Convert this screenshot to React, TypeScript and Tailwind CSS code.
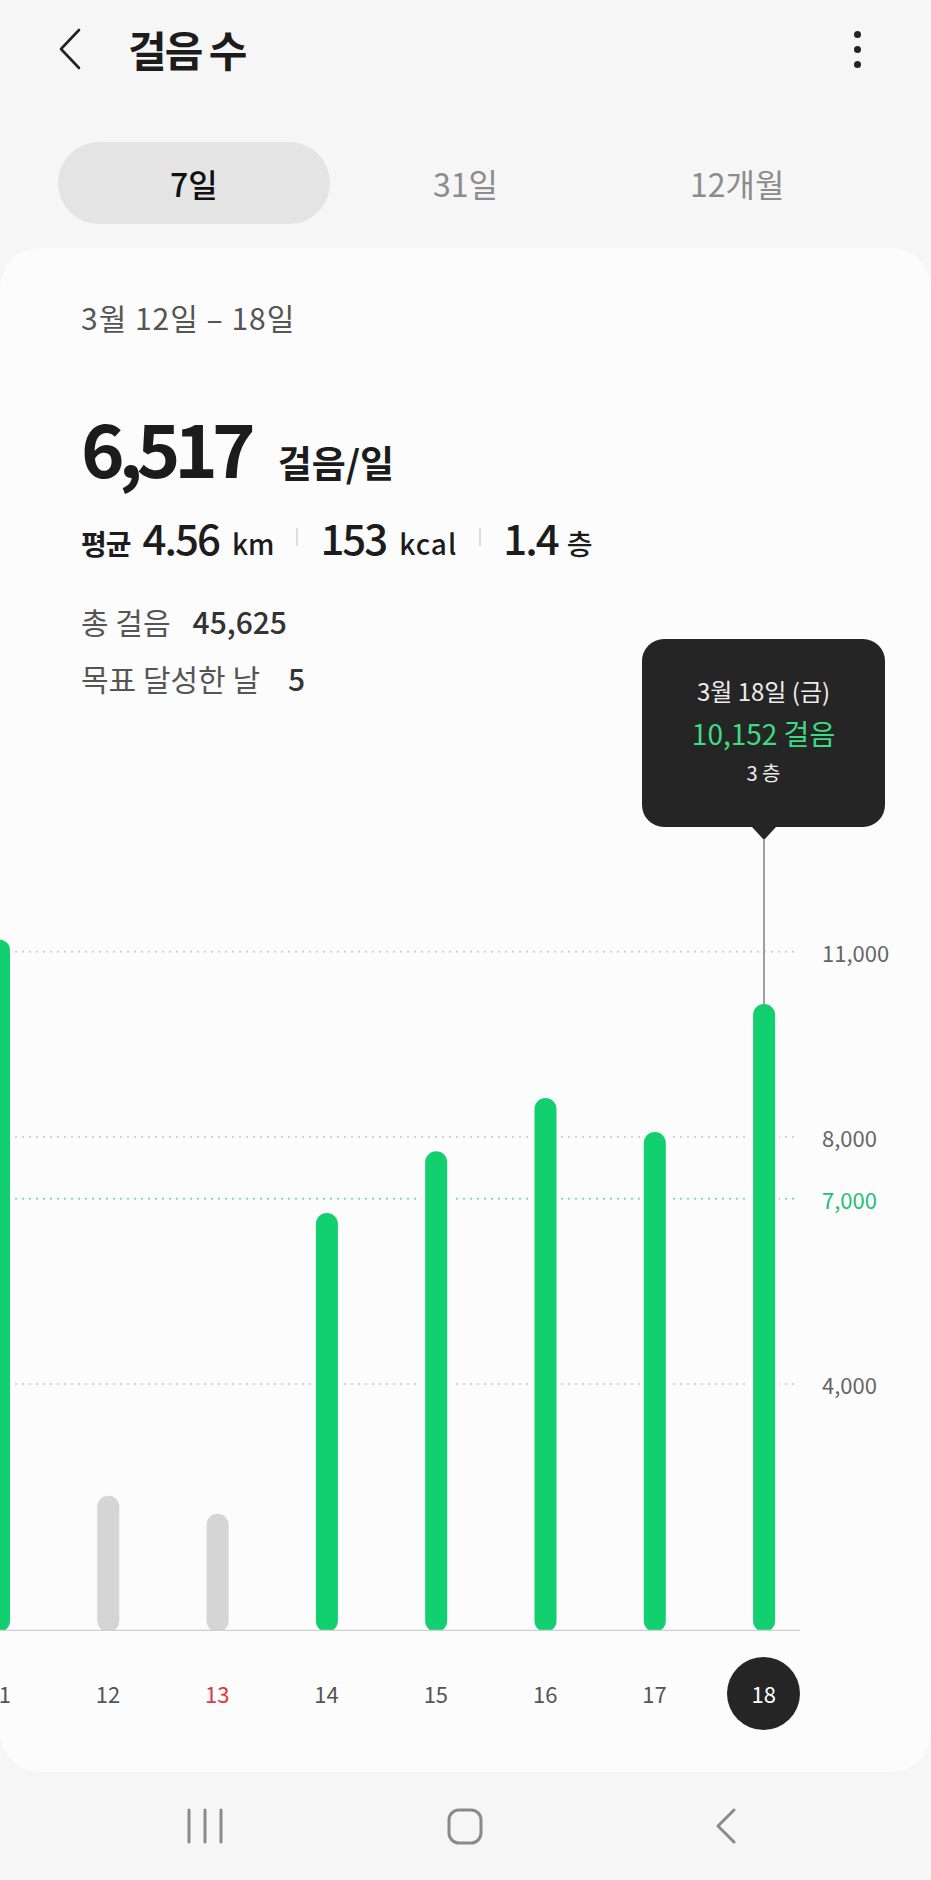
import React from "react";

const STEP = 109.3;
const X0 = -1;
const BASE = 731;
const PX = 0.06175;

const days = [
  { d: "11", v: 11200, green: true },
  { d: "12", v: 2190, green: false },
  { d: "13", v: 1900, green: false, red: true },
  { d: "14", v: 6770, green: true },
  { d: "15", v: 7770, green: true },
  { d: "16", v: 8630, green: true },
  { d: "17", v: 8080, green: true },
  { d: "18", v: 10152, green: true, sel: true },
];

const grid = [
  { v: 11000, label: "11,000", goal: false },
  { v: 8000, label: "8,000", goal: false },
  { v: 7000, label: "7,000", goal: true },
  { v: 4000, label: "4,000", goal: false },
];

function Chart() {
  return (
    <div className="relative h-[731px] w-full">
      <svg className="absolute inset-0" width={931} height={731} viewBox="0 0 931 731">
        {grid.map((g) => {
          const y = BASE - g.v * PX;
          return (
            <line
              key={g.v}
              x1={2}
              x2={797}
              y1={y}
              y2={y}
              stroke={g.goal ? "#5cd39e" : "#c6c6c6"}
              strokeWidth={2}
              strokeDasharray="0 7"
              strokeLinecap="round"
            />
          );
        })}
        {days.map((d, i) => {
          const cx = X0 + STEP * i;
          const top = BASE - d.v * PX;
          return (
            <rect key={"h" + d.d} x={cx - 15} y={top - 4} width={30} height={BASE - top + 8} rx={15} fill="#fcfcfc" />
          );
        })}
        {days.map((d, i) => {
          const cx = X0 + STEP * i;
          const top = BASE - d.v * PX;
          return (
            <rect
              key={d.d}
              x={cx - 11}
              y={top}
              width={22}
              height={BASE - top + 1}
              rx={11}
              fill={d.green ? "#12cf6f" : "#d5d5d5"}
            />
          );
        })}
        <line x1={0} x2={800} y1={BASE} y2={BASE} stroke="#cfcfcf" strokeWidth={2.5} />
      </svg>
      {grid.map((g) => (
        <div
          key={g.label}
          className={
            "absolute left-[822px] -translate-y-1/2 text-[22px] leading-none " +
            (g.goal ? "text-[#22bf78]" : "text-[#666666]")
          }
          style={{ top: BASE - g.v * PX }}
        >
          {g.label}
        </div>
      ))}
    </div>
  );
}

function Tooltip() {
  return (
    <div className="absolute left-[642px] top-[391px] flex w-[243px] flex-col items-center">
      <div className="flex h-[188px] w-full flex-col items-center rounded-[22px] bg-[#252525] pt-[40px]">
        <div className="text-[24px] leading-none text-[#ececec]">3월 18일 (금)</div>
        <div className="mt-[16px] text-[28px] leading-none text-[#3ddc84]">10,152 걸음</div>
        <div className="mt-[16px] text-[20px] leading-none text-[#ececec]">3 층</div>
      </div>
      <div className="h-0 w-0 border-x-[12px] border-t-[13px] border-x-transparent border-t-[#252525]" />
      <div className="h-[164px] w-[2px] bg-[#9e9e9e]" />
    </div>
  );
}

export default function App() {
  return (
    <div className="flex h-[1880px] w-[931px] flex-col overflow-hidden bg-[#f6f6f6] font-['Noto_Sans_CJK_KR',sans-serif] text-[#1c1c1c]">
      {/* header */}
      <div className="flex h-[98px] items-center">
        <svg className="ml-[58px]" width={24} height={42} viewBox="0 0 24 42" fill="none">
          <path d="M21 2 L3 21 L21 40" stroke="#222" strokeWidth={2.6} strokeLinecap="round" strokeLinejoin="round" />
        </svg>
        <div className="ml-[46px] text-[42px] font-bold leading-none tracking-[-2px]">걸음 수</div>
        <div className="ml-auto mr-[70px] flex flex-col items-center gap-[8px]">
          <span className="h-[7px] w-[7px] rounded-full bg-[#222]" />
          <span className="h-[7px] w-[7px] rounded-full bg-[#222]" />
          <span className="h-[7px] w-[7px] rounded-full bg-[#222]" />
        </div>
      </div>

      {/* tabs */}
      <div className="mt-[44px] flex px-[58px]">
        <div className="flex h-[82px] flex-1 items-center justify-center rounded-full bg-[#e4e4e4] text-[32px] font-medium text-[#111]">
          7일
        </div>
        <div className="flex h-[82px] flex-1 items-center justify-center text-[32px] text-[#8c8c8c]">31일</div>
        <div className="flex h-[82px] flex-1 items-center justify-center text-[32px] text-[#8c8c8c]">12개월</div>
      </div>

      {/* card */}
      <div className="relative mt-[24px] h-[1524px] rounded-[40px] bg-[#fcfcfc]">
        <div className="h-[652px] pl-[81px] pt-[54px]">
          <div className="text-[30px] leading-[30px] tracking-[1px] text-[#555]">3월 12일 – 18일</div>

          <div className="mt-[77px] flex items-baseline leading-none">
            <span className="text-[74px] font-bold tracking-[-6px]">6,517</span>
            <span className="ml-[28px] text-[37px] font-semibold">걸음/일</span>
          </div>

          <div className="mt-[33px] flex items-baseline leading-none">
            <span className="text-[28px] font-bold tracking-[-1px]">평균</span>
            <span className="ml-[12px] text-[42px] font-medium tracking-[-2px]">4.56</span>
            <span className="ml-[13px] text-[28px] font-medium">km</span>
            <span className="ml-[22px] h-[18px] w-[2px] self-center bg-[#dddddd]" />
            <span className="ml-[22px] text-[42px] font-medium tracking-[-2px]">153</span>
            <span className="ml-[13px] text-[28px] font-medium tracking-[1px]">kcal</span>
            <span className="ml-[22px] h-[18px] w-[2px] self-center bg-[#dddddd]" />
            <span className="ml-[22px] text-[42px] font-medium tracking-[-2px]">1.4</span>
            <span className="ml-[9px] text-[28px] font-medium">층</span>
          </div>

          <div className="mt-[48px] flex text-[30px] leading-[30px]">
            <span className="text-[#555]">총 걸음</span>
            <span className="ml-[22px] font-medium text-[#333]">45,625</span>
          </div>
          <div className="mt-[27px] flex text-[30px] leading-[30px]">
            <span className="text-[#555]">목표 달성한 날</span>
            <span className="ml-[28px] font-medium text-[#333]">5</span>
          </div>
        </div>

        <Chart />

        <div className="ml-[-56px] mt-[26px] flex">
          {days.map((d) => (
            <div key={d.d} className="flex h-[73px] w-[109.3px] shrink-0 items-center justify-center">
              {d.sel ? (
                <div className="flex h-[73px] w-[73px] items-center justify-center rounded-full bg-[#252525] text-[22px] text-white">
                  {d.d}
                </div>
              ) : (
                <span className={"text-[22px] " + (d.red ? "text-[#e2383f]" : "text-[#555]")}>{d.d}</span>
              )}
            </div>
          ))}
        </div>

        <Tooltip />
      </div>

      {/* nav bar */}
      <div className="flex flex-1 items-center px-[75px]">
        <div className="flex flex-1 justify-center">
          <svg width={36} height={36} viewBox="0 0 36 36" fill="none">
            <path d="M2 2 V34 M18 2 V34 M34 2 V34" stroke="#8a8a8a" strokeWidth={3} strokeLinecap="round" />
          </svg>
        </div>
        <div className="flex flex-1 justify-center">
          <svg width={36} height={37} viewBox="0 0 36 37" fill="none">
            <rect x={2} y={2} width={32} height={33} rx={10} stroke="#8a8a8a" strokeWidth={3} />
          </svg>
        </div>
        <div className="flex flex-1 justify-center">
          <svg width={22} height={36} viewBox="0 0 22 36" fill="none">
            <path d="M19 2 L3 18 L19 34" stroke="#8a8a8a" strokeWidth={3} strokeLinecap="round" strokeLinejoin="round" />
          </svg>
        </div>
      </div>
    </div>
  );
}
